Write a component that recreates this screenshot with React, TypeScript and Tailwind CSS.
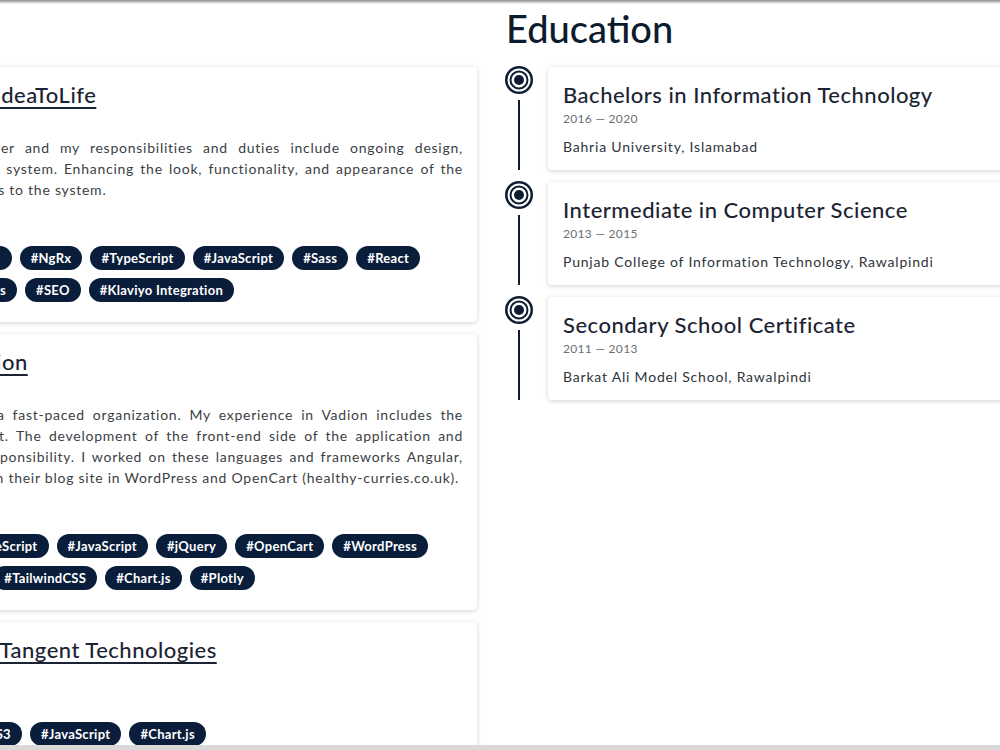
import React from 'react';

interface Job {
  title: string;
  period: string;
  lines: string[];
  tags: string[];
}

interface Degree {
  title: string;
  period: string;
  place: string;
}

const jobs: Job[] = [
  {
    title: 'Frontend Engineer at IdeaToLife',
    period: 'Feb 2021 — Present',
    lines: [
      'I work as a frontend developer and my responsibilities and duties include ongoing design,',
      'development and upkeep of the system. Enhancing the look, functionality, and appearance of the',
      'website, and adding new features to the system.',
    ],
    tags: ['#Angular8', '#RxJS', '#HTML5', '#NgRx', '#TypeScript', '#JavaScript', '#Sass', '#React', '#Bootstrap 4', '#Google Analytics', '#SEO', '#Klaviyo Integration'],
  },
  {
    title: 'Team Engineer At Vadion',
    period: 'Jul 2020 — Jan 2021',
    lines: [
      'I learned a lot by working in a fast-paced organization. My experience in Vadion includes the',
      'design and setup of the project. The development of the front-end side of the application and',
      'its maintenance was my key responsibility. I worked on these languages and frameworks Angular,',
      'React and Bootstrap. I worked on their blog site in WordPress and OpenCart (healthy-curries.co.uk).',
    ],
    tags: ['#Angular8', '#ReactJS', '#TypeScript', '#JavaScript', '#jQuery', '#OpenCart', '#WordPress', '#HTML5', '#CSS3', '#Sass', '#TailwindCSS', '#Chart.js', '#Plotly'],
  },
  {
    title: 'Associate Engineer at Tangent Technologies',
    period: 'Jan 2020 — Jun 2020',
    lines: [],
    tags: ['#Angular.js', '#HTML 5', '#CSS3', '#JavaScript', '#Chart.js'],
  },
];

const degrees: Degree[] = [
  { title: 'Bachelors in Information Technology', period: '2016 — 2020', place: 'Bahria University, Islamabad' },
  { title: 'Intermediate in Computer Science', period: '2013 — 2015', place: 'Punjab College of Information Technology, Rawalpindi' },
  { title: 'Secondary School Certificate', period: '2011 — 2013', place: 'Barkat Ali Model School, Rawalpindi' },
];

const Bullseye = () => (
  <svg width="28" height="28" viewBox="0 0 28 28" className="shrink-0">
    <circle cx="14" cy="14" r="12.75" fill="white" stroke="#0f1d33" strokeWidth="2.5" />
    <circle cx="14" cy="14" r="8.5" fill="none" stroke="#0f1d33" strokeWidth="2" />
    <circle cx="14" cy="14" r="5" fill="#0f1d33" />
  </svg>
);

const Tag = ({ label }: { label: string }) => (
  <span className="h-6 px-[11px] rounded-full bg-[#0a1e3c] text-white text-[13px] font-bold tracking-[0.3px] leading-6 whitespace-nowrap">
    {label}
  </span>
);

// each line is spread to the full width except the last one
const Paragraph = ({ lines }: { lines: string[] }) => (
  <div className="text-[14px] leading-[21px] text-[#3b3f45] tracking-[0.75px]">
    {lines.map((line, i) => (
      <p key={i} className={i < lines.length - 1 ? 'text-justify [text-align-last:justify]' : 'text-left'}>
        {line}
      </p>
    ))}
  </div>
);

const JobCard = ({ job }: { job: Job }) => (
  <div className="bg-white rounded-[4px] shadow-[0_1px_5px_rgba(0,0,0,0.18)] pl-4 pr-[14px] pt-[14px] pb-5">
    <h3 className="text-[22px] leading-7 font-medium tracking-[0.5px] text-[#1c2433] underline underline-offset-[4px] decoration-[1.5px]">
      {job.title}
    </h3>
    <p className="text-xs leading-5 text-[#6b6f75] mb-2">{job.period}</p>
    {job.lines.length > 0 && <Paragraph lines={job.lines} />}
    <p className={`text-sm leading-5 font-bold text-[#1c2433] ${job.lines.length > 0 ? 'mt-4' : ''}`}>Skills</p>
    <div className="mt-[10px] flex flex-wrap gap-2">
      {job.tags.map((t) => (
        <Tag key={t} label={t} />
      ))}
    </div>
  </div>
);

const DegreeItem = ({ degree }: { degree: Degree }) => (
  <div className="flex gap-[15px]">
    <div className="w-7 flex flex-col items-center -mt-px">
      <Bullseye />
      <div className="mt-[6px] w-[2px] flex-1 bg-[#0f1d33]" />
    </div>
    <div className="flex-1 bg-white rounded-[4px] shadow-[0_1px_5px_rgba(0,0,0,0.18)] px-[15px] pt-[14px] pb-[13px]">
      <h3 className="text-[22px] leading-7 font-medium tracking-[0.5px] text-[#1c2433]">{degree.title}</h3>
      <p className="text-xs leading-5 tracking-[0.3px] text-[#6b6f75]">{degree.period}</p>
      <p className="mt-2 text-sm leading-5 tracking-[0.8px] text-[#2f343b]">{degree.place}</p>
    </div>
  </div>
);

export default function App() {
  return (
    <div className="w-[1000px] h-[750px] overflow-hidden bg-white flex flex-col font-[Lato,sans-serif]">
      <div className="h-[4px] shrink-0 bg-linear-to-b from-[#8d8d8d] to-white" />
      <div className="flex-1 overflow-hidden">
        <div className="-ml-[240px] flex gap-[28px] w-[1462px]">
          <section className="w-[717px] shrink-0">
            <h2 className="text-[38px] leading-[48px] font-medium text-[#0d1b2e] mb-[15px]">Experience</h2>
            <div className="flex flex-col gap-3">
              {jobs.map((job) => (
                <JobCard key={job.title} job={job} />
              ))}
            </div>
          </section>
          <section className="w-[717px] shrink-0">
            <h2 className="text-[38px] leading-[48px] font-medium text-[#0d1b2e] mb-[15px] pl-[1px]">Education</h2>
            <div className="flex flex-col gap-3">
              {degrees.map((d) => (
                <DegreeItem key={d.title} degree={d} />
              ))}
            </div>
          </section>
        </div>
      </div>
      <div className="h-[5px] shrink-0 bg-[#d9d9d9]" />
    </div>
  );
}
